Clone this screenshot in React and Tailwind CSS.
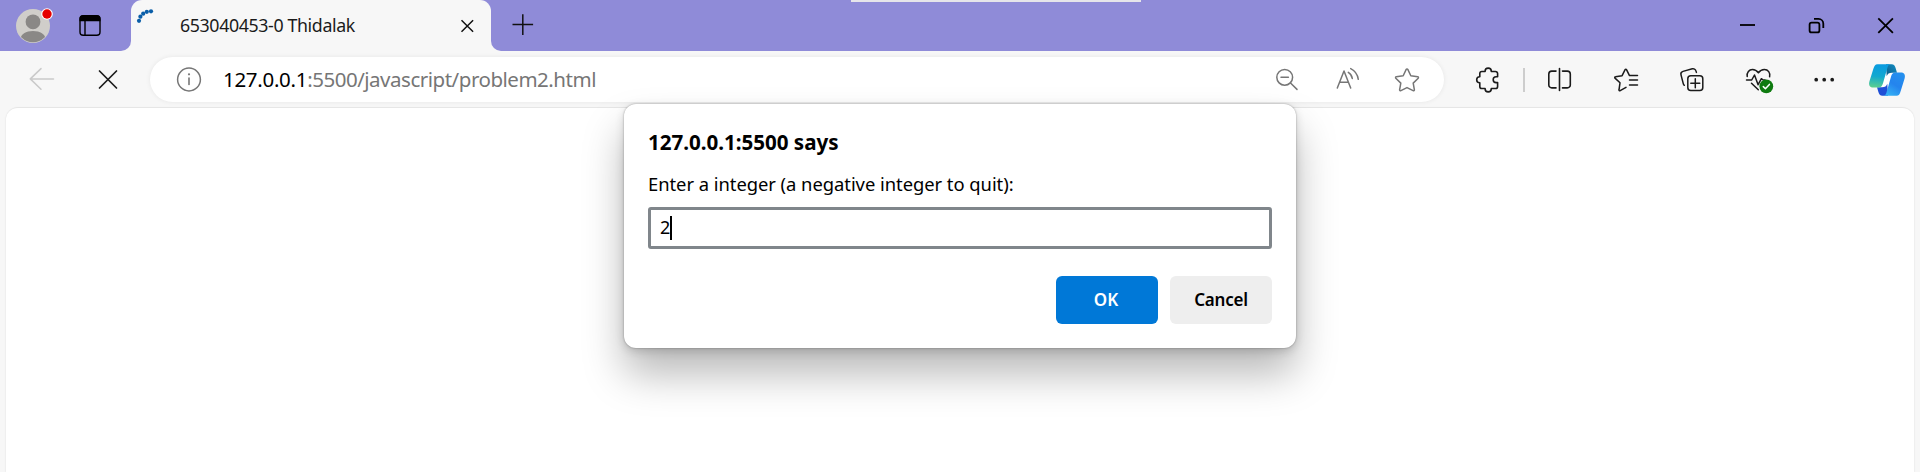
import React from "react";

const INK = "#1b1b1b";
const MUTED = "#767676";

function Slot({ w = 66, children, label }) {
  return (
    <button aria-label={label} className="block shrink-0">
      <svg width={w} height="45" viewBox={`0 0 ${w} 45`} fill="none" strokeLinecap="round" strokeLinejoin="round">
        {children}
      </svg>
    </button>
  );
}

function ProfileArea() {
  return (
    <svg width="131" height="51" viewBox="0 0 131 51" fill="none">
      <defs>
        <clipPath id="avatar"><circle cx="33" cy="26" r="16.2" /></clipPath>
      </defs>
      <circle cx="33" cy="26" r="17" fill="#d0ceca" />
      <g clipPath="url(#avatar)" fill="#8a8886">
        <circle cx="33" cy="21.8" r="7.4" />
        <path d="M20.5 44v-4.5c0-5.5 5.5-8.5 12.500-8.500s12.500 3 12.500 8.500V44z" />
      </g>
      <circle cx="47" cy="14" r="5.8" fill="#fff" />
      <circle cx="47" cy="14" r="4.7" fill="#e60000" />
      <rect x="80" y="15.7" width="20" height="19.6" rx="3.2" stroke="#000" strokeWidth="1.4" />
      <path d="M79.5 21.2v-2.4a3.6 3.6 0 0 1 3.6-3.6h13.8a3.6 3.6 0 0 1 3.6 3.6v2.4z" fill="#000" />
      <path d="M85 21v14" stroke="#000" strokeWidth="1.4" />
    </svg>
  );
}

function TabStrip() {
  return (
    <header className="flex h-[51px] bg-[#f7f7f7]">
      <div className="h-[51px] w-[131px] shrink-0 rounded-br-[10px] bg-[#8f8bd8]">
        <ProfileArea />
      </div>
      <div className="h-[51px] w-[360px] shrink-0 bg-[linear-gradient(#8f8bd8_50%,#f7f7f7_50%)]">
        <div className="flex h-[51px] items-center rounded-t-[11px] bg-[#f7f7f7]">
          <svg width="49" height="51" viewBox="131 0 49 51" fill="#0a5ea8" className="shrink-0">
            <circle cx="139" cy="20.8" r="2.1" />
            <circle cx="140.4" cy="16.7" r="2.1" />
            <circle cx="143.2" cy="13.7" r="2.1" />
            <circle cx="146.8" cy="11.8" r="2.1" />
            <circle cx="151" cy="11.3" r="2.1" />
          </svg>
          <span className="mb-[2px] w-[270px] whitespace-nowrap text-[17.8px] leading-[24px] tracking-[-0.38px] text-[#1b1b1b]">
            653040453-0 Thidalak
          </span>
          <svg width="34" height="51" viewBox="450 0 34 51" stroke="#111" strokeWidth="1.5" className="shrink-0">
            <path d="M461.5 20.2l11.6 11.6M473.1 20.2l-11.6 11.600" />
          </svg>
        </div>
      </div>
      <div className="flex h-[51px] grow rounded-bl-[10px] bg-[#8f8bd8]">
        <svg width="60" height="51" viewBox="491 0 60 51" stroke="#111" strokeWidth="1.5" className="shrink-0">
          <path d="M512.5 24.6h20.6M522.8 14.3v20.6" />
        </svg>
        <div className="ml-[300px] h-[2px] w-[290px] shrink-0 bg-[#e6e5ea]" />
        <svg width="200" height="51" viewBox="1720 0 200 51" fill="none" stroke="#000" strokeWidth="1.8" className="ml-auto shrink-0">
          <path d="M1740 25h15" />
          <rect x="1809.6" y="22.6" width="9.8" height="9.8" rx="2" />
          <path d="M1814 18.9h4.500a4.8 4.8 0 0 1 4.8 4.8v4.3" />
          <path d="M1878.3 18.3l14.6 14.6M1892.9 18.3l-14.6 14.6" />
        </svg>
      </div>
    </header>
  );
}

function AddressBar() {
  return (
    <div className="ml-[9px] flex h-[45px] w-[1294px] shrink-0 items-center rounded-full bg-white pl-[18px] pr-[7px] shadow-[0_0_5px_rgba(0,0,0,0.07)]">
      <Slot w={42} label="Site information">
        <circle cx="21" cy="22.5" r="11.4" stroke={MUTED} strokeWidth="1.5" />
        <path d="M21 21v6.5" stroke={MUTED} strokeWidth="1.6" />
        <circle cx="21" cy="17.3" r="1.1" fill={MUTED} />
      </Slot>
      <div className="mb-[2px] ml-[13px] grow whitespace-nowrap text-[20.5px] leading-[28px] tracking-[-0.48px] text-[#767676]">
        <span className="tracking-[-0.3px] text-black">127.0.0.1</span>:5500/javascript/problem2.html
      </div>
      <Slot w={60} label="Zoom out">
        <g stroke={MUTED} strokeWidth="1.5">
          <circle cx="27.7" cy="20.3" r="7.9" />
          <path d="M24 20.3h7.4M33.5 26l6.5 6.4" />
        </g>
      </Slot>
      <Slot w={60} label="Read aloud">
        <g stroke={MUTED} strokeWidth="1.5">
          <path d="M20.3 31l6.7-17 6.7 17M22.6 25.3h8.8" />
          <path d="M31.3 15.3c2.2 1.3 3.6 3.3 4 6.2M33.7 11.6c4.2 2 6.8 5.6 7.6 10.7" />
        </g>
      </Slot>
      <Slot w={60} label="Add to favorites">
        <path
          d="M29.2 12.4a.9.9 0 0 1 1.6 0l3 6.3 6.9 1a.9.9 0 0 1 .5 1.5l-5 4.9 1.2 6.7a.9.9 0 0 1-1.3.9L30 30.6l-6.1 3.1a.9.9 0 0 1-1.3-.9l1.2-6.7-5-4.9a.9.9 0 0 1 .5-1.5l6.9-1z"
          stroke={MUTED}
          strokeWidth="1.5"
        />
      </Slot>
    </div>
  );
}

function Toolbar() {
  return (
    <nav className="flex h-[56px] items-start bg-[#f7f7f7] pl-[9px] pt-[6px]">
      <Slot label="Back">
        <path d="M44.5 21.9H21.3M32 11.6L21.3 21.9 32 32.2" stroke="#cacaca" strokeWidth="1.5" />
      </Slot>
      <Slot label="Stop">
        <path d="M24.5 14l17 17M41.5 14l-17 17" stroke={INK} strokeWidth="1.7" />
      </Slot>
      <AddressBar />
      <div className="ml-[11px] flex">
        <Slot label="Extensions">
          <path
            d="M26.9 14.500h3.200v-.3a3.1 3.1 0 0 1 6.2 0v.3h4.2a2.1 2.1 0 0 1 2.1 2.1v3.200h-1.500a2.900 2.900 0 0 0 0 5.800h1.500v3.800a2.100 2.100 0 0 1-2.100 2.100h-4.200v.3a3.100 3.100 0 0 1-6.200 0v-.3h-3.200a2.100 2.100 0 0 1-2.100-2.100v-3.600h-.1a3 3 0 0 1 0-6h.1v-3.200a2.100 2.100 0 0 1 2.100-2.100z"
            stroke={INK}
            strokeWidth="1.6"
          />
        </Slot>
        <div className="ml-[2px] mr-[2px] mt-[11px] h-[24px] w-[2px] bg-[#cdcdcd]" />
        <Slot label="Split screen">
          <path
            d="M29 14.1h-4.2a3 3 0 0 0-3 3v10.8a3 3 0 0 0 3 3H29M35.5 14.1h4.8a3 3 0 0 1 3 3v10.8a3 3 0 0 1-3 3h-4.8M32.5 11.5v22"
            stroke={INK}
            strokeWidth="1.6"
          />
        </Slot>
        <Slot label="Favorites">
          <g stroke={INK} strokeWidth="1.5">
            <path d="M33 30.3l-5.8 3.4a.8.8 0 0 1-1.2-.9l1-7-5-4.7a.8.8 0 0 1 .5-1.4l6.6-1 3-6.1a.8.8 0 0 1 1.4 0l3 6h8" />
            <path d="M36.5 23h8M36.5 27.9h8" />
          </g>
        </Slot>
        <Slot label="Collections">
          <g stroke={INK} strokeWidth="1.5">
            <rect x="28.8" y="18.8" width="15" height="14.8" rx="3" />
            <path d="M36.3 21.7v9M31.8 26.2h9" />
            <path d="M25.3 28.3a2.8 2.8 0 0 1-1.1-1.9l-2.2-8.5a2.9 2.9 0 0 1 2-3.5l9.3-2.6a2.9 2.9 0 0 1 3.6 2l.5 1.6" />
          </g>
        </Slot>
        <Slot label="Browser essentials">
          <g stroke={INK} strokeWidth="1.5">
            <path d="M22.2 19.5c-.6-4 2-7 5.2-7 2.6 0 4.5 1.2 6 3.3 1.5-2.1 3.5-3.3 6-3.3 3.6 0 6.2 3.2 5.2 7.300" />
            <path d="M21.5 23h5.2l2.8-5 3.6 9.7 3.3-6 1.7 1.3h2M26.5 26.2l6.8 6.6" />
          </g>
          <circle cx="41.3" cy="29.3" r="6.9" fill="#0f7b10" />
          <path d="M38.3 29.6l2.1 2.1 4-4.3" stroke="#fff" strokeWidth="1.5" />
        </Slot>
        <Slot label="Settings and more">
          <g fill={INK}>
            <circle cx="25.2" cy="22.7" r="1.85" />
            <circle cx="33.2" cy="22.7" r="1.85" />
            <circle cx="41.2" cy="22.7" r="1.85" />
          </g>
        </Slot>
        <Slot w={60} label="Copilot">
          <defs>
            <linearGradient id="cpA" x1="0.2" y1="0" x2="0.1" y2="1">
              <stop offset="0" stopColor="#0a9be0" />
              <stop offset="0.5" stopColor="#12a9cf" />
              <stop offset="1" stopColor="#5fd08d" />
            </linearGradient>
            <linearGradient id="cpB" x1="0.8" y1="0" x2="0.2" y2="1">
              <stop offset="0" stopColor="#2590ee" />
              <stop offset="0.5" stopColor="#2484ee" />
              <stop offset="1" stopColor="#36b4f5" />
            </linearGradient>
            <linearGradient id="cpC" x1="1" y1="0" x2="0" y2="1">
              <stop offset="0" stopColor="#1490c6" />
              <stop offset="1" stopColor="#0c5a86" />
            </linearGradient>
          </defs>
          <path d="M28 15h10v1l-6 15H22v-1z" fill="#fff" />
          <path d="M29 7.2h5.5c2.5 0 3.4 1.6 4.1 3.8l1.4 4.7h-5c-3 0-4.5 1-5.3 3.5z" fill="url(#cpC)" />
          <path d="M31 38.8h-5.500c-2.500 0-3.400-1.600-4.100-3.800L20 30.300h5c3 0 4.500-1 5.300-3.500z" fill="#1f4fd6" />
          <path d="M20.5 7.2H34c-2.3 0-3 1.6-3.7 4l-4.3 15c-.8 2.8-2 4.2-4.6 4.2h-5.2c-3.8 0-4.7-2.7-3.8-6l3.9-12.4C17.3 8.7 18.2 7.2 20.500 7.200z" fill="url(#cpA)" />
          <path d="M39.5 38.8H26c2.3 0 3-1.6 3.7-4l4.3-15c.8-2.8 2-4.2 4.6-4.2h5.2c3.8 0 4.7 2.7 3.8 6l-3.9 12.400c-1 3.300-1.900 4.800-4.200 4.800z" fill="url(#cpB)" />
        </Slot>
      </div>
    </nav>
  );
}

function PromptDialog() {
  return (
    <section
      role="dialog"
      className="absolute left-[624px] top-[104px] h-[244px] w-[672px] rounded-[12px] bg-white px-6 pt-[24px] text-black shadow-[0_0_2px_rgba(0,0,0,0.35),0_3px_10px_rgba(0,0,0,0.16),0_26px_42px_rgba(0,0,0,0.28)]"
    >
      <h1 className="whitespace-nowrap text-[20.6px] font-bold leading-[28px] tracking-[-0.03px]">127.0.0.1:5500 says</h1>
      <p className="mt-[15px] h-[24px] overflow-hidden whitespace-nowrap text-[18.4px] leading-[26px] tracking-[-0.04px]">
        Enter a integer (a negative integer to quit):
      </p>
      <div className="mt-[12px] flex h-[42px] items-center rounded-[3px] border-[3px] border-[#80868b] pl-[9px]">
        <span className="mb-[2px] text-[18px] leading-[24px]">2</span>
        <span className="h-[24px] w-[2px] bg-black" />
      </div>
      <div className="mt-[27px] flex justify-end gap-3 text-[17px] font-semibold leading-[24px]">
        <button className="h-[48px] w-[102px] rounded-[6px] bg-[#0078d7] pr-[2px] text-white">OK</button>
        <button className="h-[48px] w-[102px] rounded-[6px] bg-[#eeeeee] tracking-[-0.2px]">Cancel</button>
      </div>
    </section>
  );
}

export default function App() {
  return (
    <div className="relative h-[472px] w-[1920px] overflow-hidden bg-[#f7f7f7] font-['Noto_Sans',sans-serif]">
      <TabStrip />
      <Toolbar />
      <main className="mx-[6px] h-[365px] rounded-t-[12px] border-t border-[#e6e6e6] bg-white shadow-[0_1px_2px_rgba(0,0,0,0.12)]" />
      <PromptDialog />
    </div>
  );
}
